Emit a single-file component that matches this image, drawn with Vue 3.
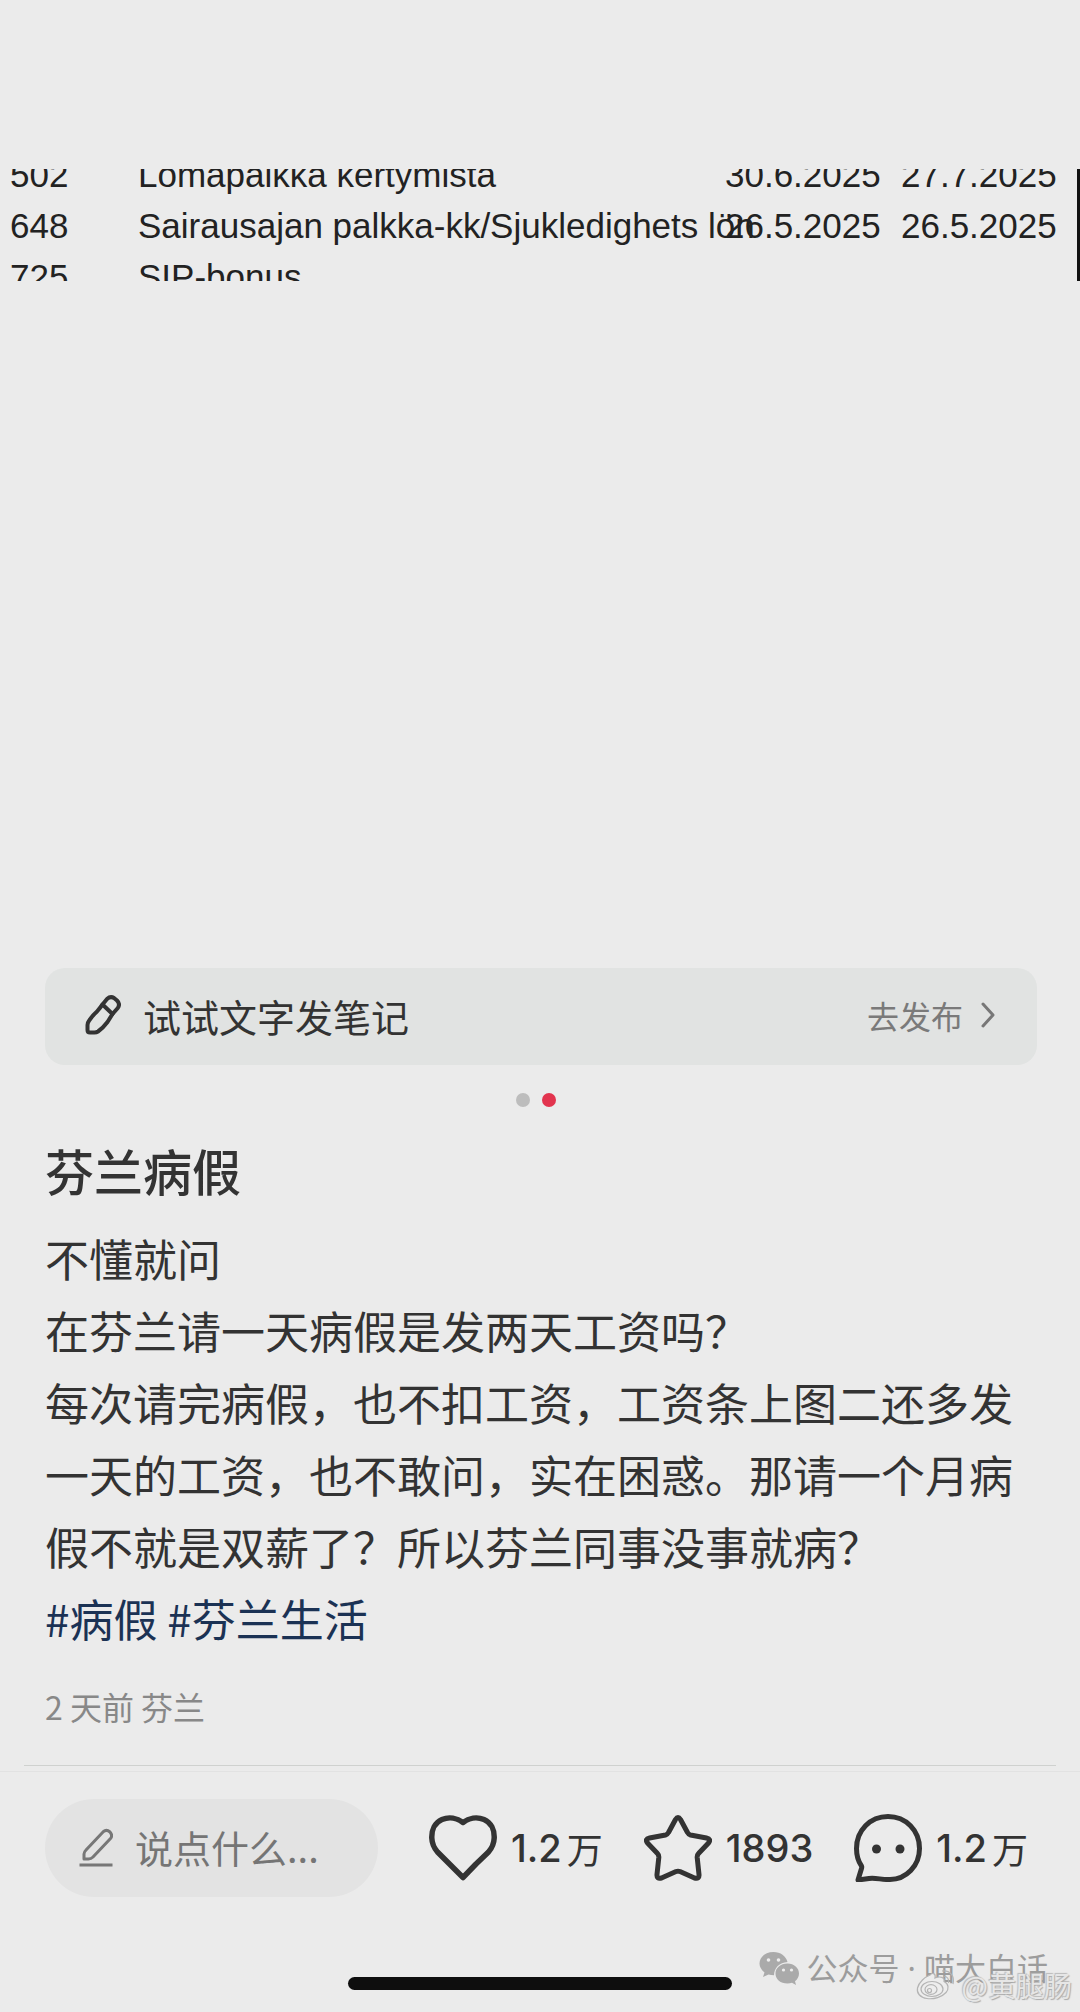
<script setup>
import { ref } from 'vue'

const payRows = [
  { code: '502', name: 'Lomapalkka kertymistä', from: '30.6.2025', to: '27.7.2025' },
  { code: '648', name: 'Sairausajan palkka-kk/Sjukledighets lön', from: '26.5.2025', to: '26.5.2025' },
  { code: '725', name: 'SIP-bonus', from: '', to: '' },
]

const paragraphs = [
  '不懂就问',
  '在芬兰请一天病假是发两天工资吗？',
  '每次请完病假，也不扣工资，工资条上图二还多发一天的工资，也不敢问，实在困惑。那请一个月病假不就是双薪了？所以芬兰同事没事就病？',
]

const tags = ['#病假', '#芬兰生活']
const comment = ref('')
</script>

<template>
  <div class="page">
    <main class="note">
      <section class="slide">
        <div class="payslip">
          <table class="pay-table">
            <tbody>
              <tr v-for="row in payRows" :key="row.code">
                <td class="col-code">{{ row.code }}</td>
                <td class="col-name">{{ row.name }}</td>
                <td class="col-from">{{ row.from }}</td>
                <td>{{ row.to }}</td>
              </tr>
            </tbody>
          </table>
        </div>
      </section>

      <button class="publish" type="button">
        <svg class="publish-icon" viewBox="0 0 36 40" fill="none" stroke="#333" stroke-width="4" stroke-linejoin="round" stroke-linecap="round">
          <path d="M22 4Q25.500 0.800 29 3L32 5.500Q35.500 9 32.800 13L27.500 19Q25 23 22.500 27Q18 33 13 36.500Q11.500 37.500 9.500 37.500H5Q2.500 37.500 2.500 35V30Q2.500 27.500 4.500 25Q8 20 12 16.500Q15 13 17.500 9.500Z" />
          <path d="M17.500 9.500L27.500 19" />
        </svg>
        <span class="publish-label">试试文字发笔记</span>
        <span class="publish-go">去发布</span>
        <svg class="chevron" viewBox="0 0 14 26" fill="none" stroke="#777" stroke-width="3" stroke-linecap="round" stroke-linejoin="round">
          <path d="M2 2L12 13L2 24" />
        </svg>
      </button>

      <div class="dots">
        <span class="dot"></span>
        <span class="dot dot-on"></span>
      </div>

      <article class="post">
        <h1>芬兰病假</h1>
        <p v-for="text in paragraphs" :key="text">{{ text }}</p>
        <p class="tags">
          <template v-for="tag in tags" :key="tag"><a href="#">{{ tag }}</a>{{ ' ' }}</template>
        </p>
        <div class="meta">2 天前 芬兰</div>
      </article>
      <hr />
    </main>

    <footer class="bar">
      <label class="say">
        <svg class="say-icon" viewBox="0 0 34 40" fill="none" stroke="#777" stroke-width="3" stroke-linejoin="round" stroke-linecap="round">
          <path d="M24.500 3.500Q27.500 1 31 4Q34 7.500 31.500 10.500L14 29Q12 31 9.500 31H5V26Q5 24 7 22Z" />
          <path d="M2 37H32" stroke-linecap="square" />
        </svg>
        <input v-model="comment" type="text" placeholder="说点什么..." aria-label="说点什么" />
      </label>
      <button class="action" type="button" aria-label="点赞">
        <svg viewBox="0 0 68 68" fill="none" stroke="#333" stroke-width="5.500" stroke-linejoin="round">
          <path d="M34 8.500C40 4 48 2.500 55 5.500C62 8.500 65.500 16 65.200 24C65 29 63 34 59.500 38L47 50L34 63.500L21 50.500L8.500 38C5 34 3 29 2.800 24C2.500 16 6 8.500 13 5.500C20 2.500 28 4 34 8.500Z" />
        </svg>
        <span class="num">1.2</span><span class="unit">万</span>
      </button>
      <button class="action" type="button" aria-label="收藏">
        <svg viewBox="0 0 68 68" fill="none" stroke="#333" stroke-width="5" stroke-linejoin="round">
          <path d="M31.500 5.500Q34 1.500 36.500 5.500L43.500 18.500Q44.500 20.500 46.500 21L62.500 24Q67.500 25 64.500 29L54.500 39.500Q53 41 53.200 43.500L55 60.500Q55.500 65.500 50.500 64L36 57.500Q34 56.800 32 57.500L17.500 64Q12.500 65.500 13 60.500L14.800 43.500Q15 41 13.500 39.500L3.500 29Q0.500 25 5.500 24L21.500 21Q23.500 20.500 24.500 18.500Z" />
        </svg>
        <span class="num">1893</span>
      </button>
      <button class="action" type="button" aria-label="评论">
        <svg viewBox="0 0 68 68" fill="none" stroke="#333" stroke-width="5" stroke-linejoin="round">
          <path d="M7.500 52C4 47 2.500 41 2.500 34.500C2.500 16.500 16 2.500 34 2.500C52 2.500 65.500 16.500 65.500 34.500C65.500 52 52 65.500 36 65.500C28 66 22 63.500 15 64.500L4 66L7.500 54.500Q8 53 7.500 52Z" />
          <circle cx="22.500" cy="35" r="4.500" fill="#333" stroke="none" />
          <circle cx="46" cy="35" r="4.500" fill="#333" stroke="none" />
        </svg>
        <span class="num">1.2</span><span class="unit">万</span>
      </button>
    </footer>

    <div class="home-area">
      <div class="home-indicator"></div>
      <div class="mark-wechat">
        <svg viewBox="0 0 40 34">
          <path fill="#aaa" d="M14.500 1C6.500 1 0.500 6 0.500 12.500C0.500 16 2.500 19 5.500 21.500L4 26L9.500 23.500Q12 24.300 15 24.300C15 17 20.500 11.500 28.500 11C27 5 21.500 1 14.500 1Z" />
          <path fill="#aaa" d="M28.500 12.500C21.500 12.500 16.500 17 16.500 22.500C16.500 28.500 21.500 32.500 28.500 32.500Q31 32.500 33 31.800L37 34L36 30.200C38.500 28.500 40 25.500 40 22.500C40 17 35 12.500 28.500 12.500Z" />
          <g fill="#eee">
            <circle cx="9.500" cy="9" r="1.800" /><circle cx="19.500" cy="9" r="1.800" />
            <circle cx="24.500" cy="19" r="1.600" /><circle cx="32.500" cy="19" r="1.600" />
          </g>
        </svg>
        <span>公众号 · 喵大白话</span>
      </div>
      <div class="mark-weibo">
        <svg viewBox="0 0 40 32" fill="none" stroke="#b4b4b4" stroke-width="1.200">
          <path fill="#ededed" d="M14 6C17 3 20 5 19 9C24 7 29 8 28 12.500C33 15 33 20 30 23.500C26 28 18 30.500 11 29.500C4 28.500 0.500 24 1.500 19C3 13 9 8 14 6Z" />
          <ellipse cx="16" cy="20" rx="11" ry="7.500" />
          <ellipse cx="15" cy="20.500" rx="6" ry="4.800" />
          <circle cx="13.500" cy="21.500" r="2" />
          <path d="M26 2C34 1 39 7 37 15M27 7C31 7 33.500 10 32.500 14" />
        </svg>
        <span>@黄腿肠</span>
      </div>
    </div>
  </div>
</template>

<style>
body {
  margin: 0;
  background: #ebebeb;
}
</style>

<style scoped>
.page {
  min-height: 100vh;
  display: flex;
  flex-direction: column;
  background: #ebebeb;
  color: #333;
  font-family: "Noto Sans CJK SC", "Noto Sans", sans-serif;
  overflow: hidden;
}

button,
input {
  font: inherit;
  color: inherit;
  border: 0;
  padding: 0;
  background: none;
}

svg {
  display: block;
  flex: none;
}

.note {
  flex: 1;
}

.slide {
  padding: 169px 0 687px;
}

.payslip {
  height: 112px;
  display: flex;
  align-items: center;
  overflow: hidden;
  border-right: 3px solid #111;
}

.pay-table {
  width: 100%;
  table-layout: fixed;
  border-collapse: collapse;
  margin-left: 10px;
  font-family: "Liberation Sans", Arial, sans-serif;
  font-size: 35px;
  line-height: 51px;
  white-space: nowrap;
  color: #222;
}

.pay-table td {
  padding: 0;
}

.col-code {
  width: 128px;
}

.col-name {
  width: 587px;
}

.col-from {
  width: 176px;
}

.publish {
  display: flex;
  align-items: center;
  width: calc(100% - 88px);
  height: 97px;
  margin: 0 43px 0 45px;
  padding: 0 42px 3px 40px;
  border-radius: 20px;
  background: #e1e3e2;
  text-align: left;
}

.publish-icon {
  width: 36px;
  height: 40px;
}

.publish-label {
  margin-left: 22px;
  font-size: 38px;
}

.publish-go {
  margin-left: auto;
  font-size: 32px;
  color: #7a7a7a;
}

.chevron {
  width: 14px;
  height: 26px;
  margin-left: 18px;
}

.dots {
  display: flex;
  justify-content: center;
  gap: 12px;
  padding: 28px 8px 0 0;
}

.dot {
  width: 14px;
  height: 14px;
  border-radius: 50%;
  background: #bdbdbd;
}

.dot-on {
  background: #e2344e;
}

.post {
  padding: 27px 45px 0;
}

h1 {
  margin: 0 0 16px;
  font-size: 49px;
  line-height: 72px;
  font-weight: 500;
}

p {
  margin: 0;
  font-size: 44px;
  line-height: 72px;
}

.tags a {
  color: #1b3254;
  text-decoration: none;
}

.meta {
  margin-top: 28px;
  font-size: 32px;
  line-height: 48px;
  color: #888;
}

hr {
  height: 1px;
  margin: 35px 24px 0;
  border: 0;
  background: #cfd1cf;
}

.bar {
  display: flex;
  align-items: center;
  gap: 41px;
  margin-top: 5px;
  padding: 27px 52px 0 45px;
  border-top: 1px solid #e2e2e2;
}

.say {
  flex: 1;
  display: flex;
  align-items: center;
  min-width: 0;
  height: 98px;
  margin-right: 10px;
  padding: 0 34px;
  box-sizing: border-box;
  border-radius: 49px;
  background: #e3e3e3;
}

.say-icon {
  width: 34px;
  height: 40px;
}

.say input {
  flex: 1;
  min-width: 0;
  margin-left: 22px;
  padding-bottom: 4px;
  font-size: 38px;
  outline: none;
}

.say input::placeholder {
  color: #757575;
  opacity: 1;
}

.action {
  display: flex;
  align-items: center;
}

.action svg {
  width: 68px;
  height: 68px;
}

.num {
  margin-left: 14px;
  font-family: Inter, sans-serif;
  font-size: 38px;
  font-weight: 500;
}

.unit {
  margin-left: 5px;
  font-size: 36px;
}

.home-area {
  position: relative;
  display: flex;
  justify-content: center;
  padding: 80px 0 22px;
}

.home-indicator {
  width: 384px;
  height: 13px;
  border-radius: 7px;
  background: #0e0e0e;
}

.mark-wechat {
  position: absolute;
  right: 32px;
  bottom: 24px;
  display: flex;
  align-items: center;
  gap: 8px;
  font-family: "Noto Sans", "Noto Sans CJK SC", sans-serif;
  font-size: 31px;
  line-height: 40px;
  color: #9c9c9c;
}

.mark-wechat svg {
  width: 40px;
  height: 34px;
}

.mark-weibo {
  position: absolute;
  right: 8px;
  bottom: 7px;
  display: flex;
  align-items: center;
  gap: 6px;
  font-size: 28px;
  line-height: 40px;
  color: #e6e6e6;
  text-shadow: 1px 1px 1px #aaa, -1px -1px 1px #bbb;
}

.mark-weibo svg {
  width: 40px;
  height: 32px;
}
</style>
